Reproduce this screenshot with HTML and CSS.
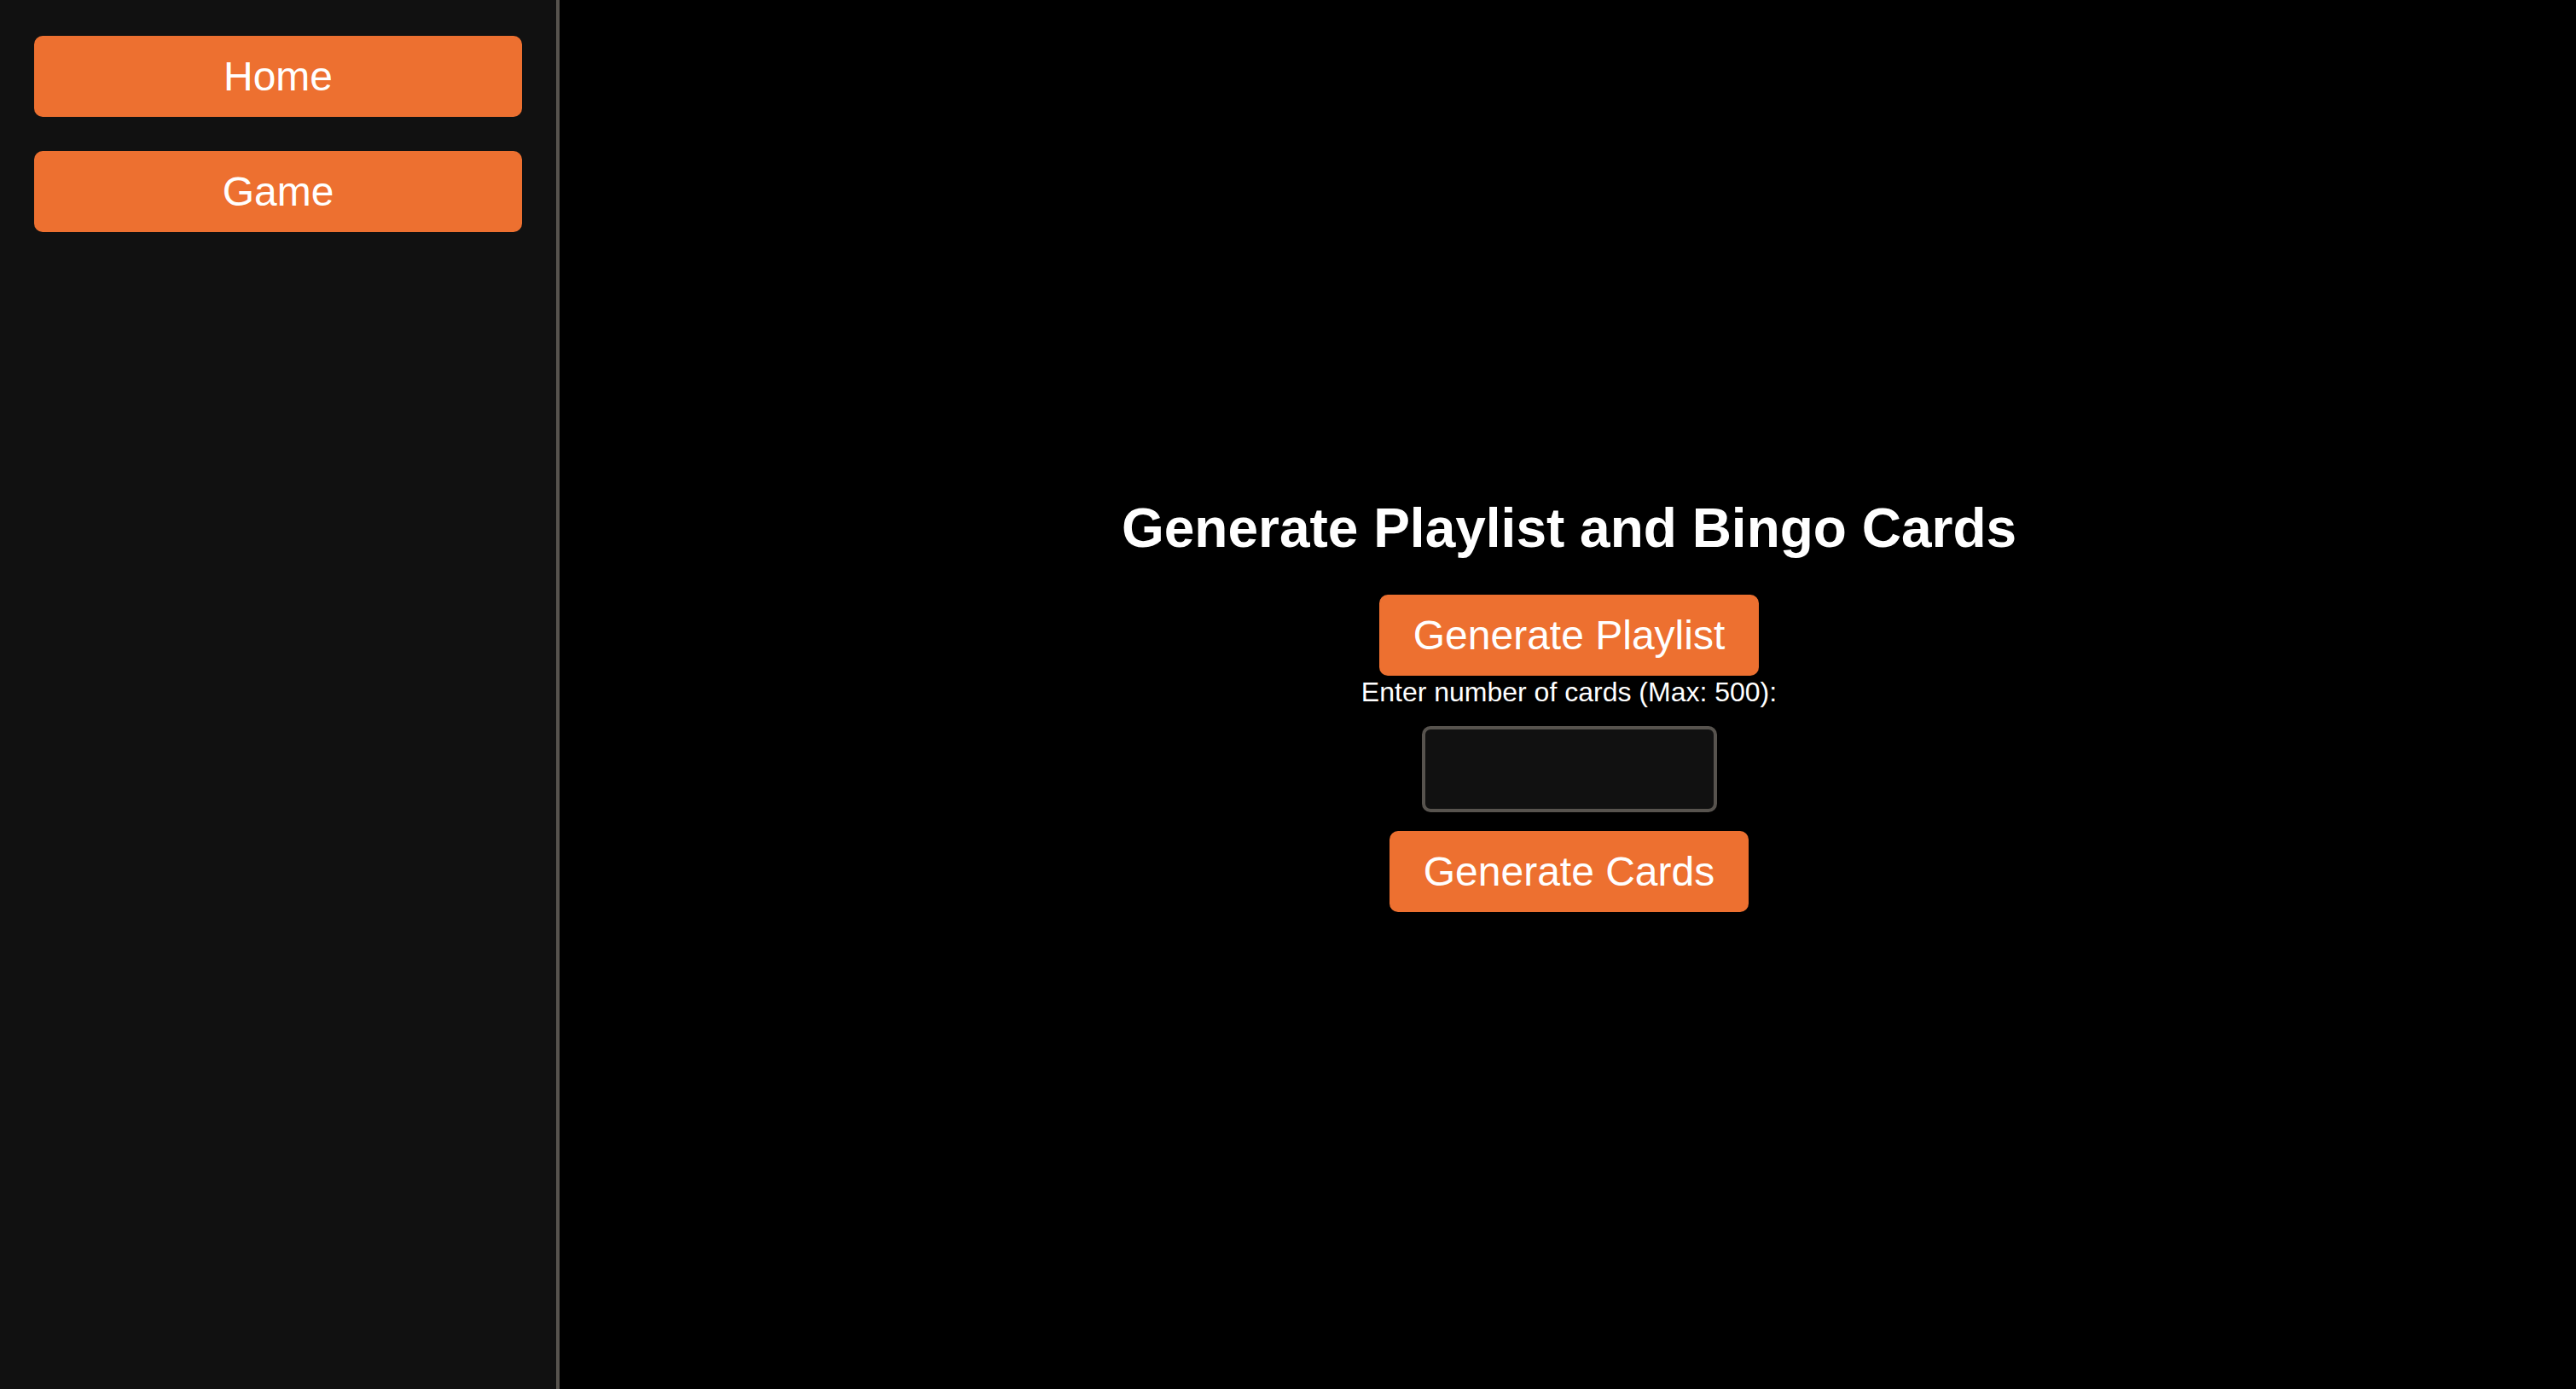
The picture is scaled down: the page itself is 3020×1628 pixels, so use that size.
FILE: index.html
```html
<!DOCTYPE html>
<html lang="en">
<head>
<meta charset="utf-8">
<title>Bingo</title>
<link rel="stylesheet" href="styles.css">
</head>
<body>
<div class="app">
  <nav class="sidebar">
    <button class="nav-btn">Home</button>
    <button class="nav-btn">Game</button>
  </nav>
  <main class="main">
    <h1 class="title">Generate Playlist and Bingo Cards</h1>
    <button class="action-btn">Generate Playlist</button>
    <label class="count-label" for="count">Enter number of cards (Max: 500):</label>
    <input class="count-input" id="count" type="number">
    <button class="action-btn cards-btn">Generate Cards</button>
  </main>
</div>
</body>
</html>
```
FILE: styles.css
```css
html, body {
  margin: 0;
  padding: 0;
  height: 100%;
  background: #000;
  font-family: "Liberation Sans", Arial, sans-serif;
  color: #fff;
}
.app {
  display: flex;
  height: 100vh;
}
.sidebar {
  box-sizing: border-box;
  width: 656px;
  flex: 0 0 656px;
  background: #111111;
  border-right: 4px solid #57534e;
  padding: 42px 40px 0;
  display: flex;
  flex-direction: column;
  gap: 40px;
}
.nav-btn {
  display: block;
  width: 100%;
  height: 95px;
  border: none;
  border-radius: 10px;
  background: #ed7030;
  color: #fff;
  font-family: "Liberation Sans", Arial, sans-serif;
  font-size: 48px;
  line-height: 55px;
  padding: 20px 0;
  cursor: pointer;
}
.main {
  flex: 1;
  display: flex;
  flex-direction: column;
  align-items: center;
  justify-content: center;
  padding: 23px 0 0 3px;
  box-sizing: border-box;
}
.title {
  margin: 0 0 41px;
  font-size: 64px;
  line-height: 74px;
  font-weight: bold;
}
.action-btn {
  border: none;
  border-radius: 10px;
  background: #ed7030;
  color: #fff;
  font-family: "Liberation Sans", Arial, sans-serif;
  font-size: 48px;
  line-height: 55px;
  padding: 20px 40px;
  height: 95px;
  cursor: pointer;
}
.count-label {
  display: block;
  margin-top: 1px;
  font-size: 32px;
  line-height: 37px;
}
.count-input {
  margin-top: 21px;
  width: 346px;
  height: 101px;
  box-sizing: border-box;
  border: 4px solid #57534e;
  border-radius: 10px;
  background: #111111;
  color: #fff;
  font-size: 32px;
  padding: 0 16px;
}
.cards-btn {
  margin-top: 22px;
}
```
